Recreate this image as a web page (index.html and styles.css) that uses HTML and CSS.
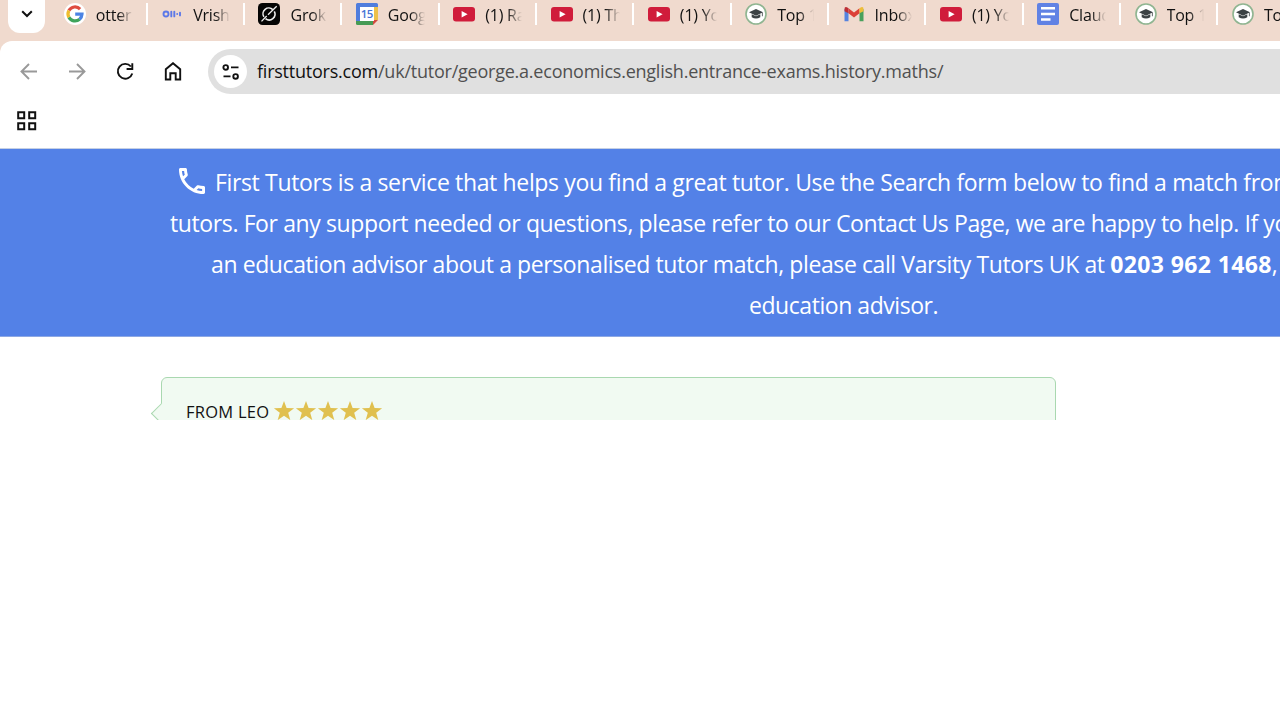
FILE: index.html
```
<!DOCTYPE html>
<html lang="en">
<head>
    <meta charset="UTF-8">
    <meta name="viewport" content="width=device-width, initial-scale=1.0">
    <title>First Tutors</title>
    <link rel="stylesheet" href="styles.css">
</head>
<body>
    <!-- Shared icons -->
    <svg class="symbols" width="0" height="0">
        <symbol id="youtube" viewBox="0 0 22 22">
            <rect x="0" y="4" width="22" height="14.5" rx="3" fill="#d01c3b"/>
            <path d="M8.6 8v6.4l6-3.2z" fill="#fff"/>
        </symbol>
        <symbol id="tutors" viewBox="0 0 22 22">
            <circle cx="11" cy="11" r="10" fill="#fff" stroke="#8fb591" stroke-width="1.6"/>
            <path d="M11 6l7 3.3-7 3.4-7-3.4zM6.7 11.2l4.3 2.1 4.3-2.1v3.1q-4.3 2.4-8.6 0zM16.9 9.7h.8v3.6h-.8z" fill="#3b4144"/>
        </symbol>
    </svg>

    <div class="tab-strip">
        <button class="tab-search">
            <svg width="12" height="8" viewBox="0 0 12 8"><path d="M1.2 1.2L6 6l4.8-4.8" fill="none" stroke="#111" stroke-width="2"/></svg>
        </button>
        <div class="tabs">
            <div class="tab">
                <svg class="favicon" viewBox="0 0 22 22">
                    <circle cx="11" cy="11" r="11" fill="#fff"/>
                    <g fill="none" stroke-width="3.2">
                        <path d="M16.1 6.1A7 7 0 0 0 4.9 7.6" stroke="#df4b3f"/>
                        <path d="M4.9 7.6a7 7 0 0 0 0 6.8" stroke="#efbd2c"/>
                        <path d="M4.9 14.4a7 7 0 0 0 10.7 1.8" stroke="#3fa45b"/>
                        <path d="M15.6 16.2A7 7 0 0 0 18 11.2H11.2" stroke="#4c83e4"/>
                    </g>
                </svg>
                <span class="tab-title">otter</span>
            </div>
            <div class="tab">
                <svg class="favicon" viewBox="0 0 22 22">
                    <g fill="none" stroke="#5d79e8" stroke-width="1.9" stroke-linecap="round">
                        <circle cx="5" cy="11" r="2.5"/>
                        <path d="M10.3 8.6v4.8M13.3 8.6v4.8M16.2 11v.1M19 9.6v2.8"/>
                    </g>
                </svg>
                <span class="tab-title">Vrish</span>
            </div>
            <div class="tab">
                <svg class="favicon" viewBox="0 0 22 22">
                    <rect width="22" height="22" rx="4.5" fill="#050505"/>
                    <g fill="none" stroke="#eee" stroke-width="1.6">
                        <path d="M14.8 6.6A5.8 5.8 0 0 0 5.9 13.9M7.5 15.6A5.8 5.8 0 0 0 16.3 8.4"/>
                        <path d="M3.5 18.4L8.7 13M10 11.7l8.7-8.4" stroke-width="1.3"/>
                    </g>
                </svg>
                <span class="tab-title">Grok</span>
            </div>
            <div class="tab">
                <svg class="favicon" viewBox="0 0 22 22">
                    <path d="M1.5 0h19A1.5 1.5 0 0 1 22 1.5V17H0V1.5A1.5 1.5 0 0 1 1.5 0z" fill="#507ddd"/>
                    <path d="M0 3h4v15H0z" fill="#507ddd"/>
                    <path d="M18 4h4v13h-4z" fill="#edc14a"/>
                    <path d="M0 18h17v4H1.5A1.5 1.5 0 0 1 0 20.5z" fill="#479b55"/>
                    <path d="M17 17h5l-5 5z" fill="#d34b41"/>
                    <rect x="4" y="4" width="14" height="14" fill="#fff"/>
                    <text x="10.8" y="15.2" text-anchor="middle" class="calendar-day">15</text>
                </svg>
                <span class="tab-title">Goog</span>
            </div>
            <div class="tab">
                <svg class="favicon"><use href="#youtube"/></svg>
                <span class="tab-title">(1) Ra</span>
            </div>
            <div class="tab">
                <svg class="favicon"><use href="#youtube"/></svg>
                <span class="tab-title">(1) Th</span>
            </div>
            <div class="tab">
                <svg class="favicon"><use href="#youtube"/></svg>
                <span class="tab-title">(1) Yo</span>
            </div>
            <div class="tab">
                <svg class="favicon"><use href="#tutors"/></svg>
                <span class="tab-title">Top 1</span>
            </div>
            <div class="tab">
                <svg class="favicon" viewBox="0 0 22 22">
                    <path d="M1.5 6v12.2h4V9z" fill="#5583df"/>
                    <path d="M20.5 6v12.2h-4V9z" fill="#48a05c"/>
                    <path d="M5.5 5.2L11 9.4l5.5-4.2v5L11 14.4l-5.5-4.2z" fill="#dc4037"/>
                    <path d="M1.5 8.2V6q0-3.4 4-.8v5z" fill="#bd2f36"/>
                    <path d="M20.5 8.2V6q0-3.4-4-.8v5z" fill="#edbd39"/>
                </svg>
                <span class="tab-title">Inbox</span>
            </div>
            <div class="tab">
                <svg class="favicon"><use href="#youtube"/></svg>
                <span class="tab-title">(1) Yo</span>
            </div>
            <div class="tab">
                <svg class="favicon" viewBox="0 0 22 22">
                    <rect width="22" height="22" rx="2" fill="#6182e4"/>
                    <path d="M4 5.3h14M4 11h14M4 16.5h9.500" stroke="#fff" stroke-width="2.4"/>
                </svg>
                <span class="tab-title">Claud</span>
            </div>
            <div class="tab">
                <svg class="favicon"><use href="#tutors"/></svg>
                <span class="tab-title">Top 1</span>
            </div>
            <div class="tab">
                <svg class="favicon"><use href="#tutors"/></svg>
                <span class="tab-title">Top 1</span>
            </div>
        </div>
    </div>

    <div class="browser">
        <div class="toolbar">
            <div class="nav-buttons">
                <svg viewBox="0 0 20 20" class="disabled"><path d="M18 9.5H3M10 2L2.5 9.5 10 17"/></svg>
                <svg viewBox="0 0 20 20" class="disabled"><path d="M2 9.5h15M10 2l7.5 7.5L10 17"/></svg>
                <svg viewBox="0 0 20 20"><path d="M15.9 4.5A7.4 7.4 0 1 0 17.3 11.5M17.3 1.3V7h-5.7"/></svg>
                <svg viewBox="0 0 20 20"><path d="M2.8 17.5V7.3L10 1.2l7.2 6.1v10.2h-4.500v-6.300H7.300v6.300z"/></svg>
            </div>
            <div class="address-bar">
                <div class="site-info">
                    <svg width="18" height="16" viewBox="0 0 18 16">
                        <g fill="none" stroke="#111" stroke-width="1.9">
                            <circle cx="3.7" cy="3.4" r="2.3"/>
                            <circle cx="13.6" cy="12.4" r="2.3"/>
                            <path d="M9 3.4h7.5M1.5 12.4h7"/>
                        </g>
                    </svg>
                </div>
                <div class="url"><span class="host">firsttutors.com</span>/uk/tutor/george.a.economics.english.entrance-exams.history.maths/</div>
            </div>
        </div>
        <div class="bookmarks">
            <svg width="20" height="20" viewBox="0 0 20 20">
                <path d="M1.2 1.2h6v6h-6zM12.2 1.2h6v6h-6zM1.2 12.2h6v6h-6zM12.2 12.2h6v6h-6z" fill="none" stroke="#111" stroke-width="2"/>
            </svg>
        </div>
    </div>

    <div class="banner">
        <p class="line line-1">
            <svg class="phone" viewBox="3 3 18 18"><path fill="#fff" d="M6.54 5c.06.89.21 1.76.45 2.59l-1.2 1.2c-.41-1.2-.67-2.47-.76-3.79h1.51m9.86 12.02c.85.24 1.72.39 2.6.45v1.49c-1.32-.09-2.59-.35-3.8-.75l1.2-1.19M7.5 3H4c-.55 0-1 .45-1 1 0 9.39 7.61 17 17 17 .55 0 1-.45 1-1v-3.490c0-.55-.45-1-1-1-1.240 0-2.450-.2-3.570-.57a.84.84 0 0 0-.31-.05c-.26 0-.51.1-.71.29l-2.200 2.200a15.150 15.150 0 0 1-6.590-6.590l2.200-2.200c.28-.28.36-.67.25-1.020A11.360 11.360 0 0 1 8.500 4c0-.55-.45-1-1-1z"/></svg>
            <span>First Tutors is a service that helps you find a great tutor. Use the Search form below to find a match from</span>
        </p>
        <p class="line line-2">tutors. For any support needed or questions, please refer to our Contact Us Page, we are happy to help. If you</p>
        <p class="line line-3">an education advisor about a personalised tutor match, please call Varsity Tutors UK at <b>0203 962 1468</b>,</p>
        <p class="line line-4">education advisor.</p>
    </div>

    <div class="reviews">
        <div class="review">
            <span class="author">FROM LEO</span>
            <svg class="stars" width="110" height="22" viewBox="0 0 110 22" fill="#e0c04f">
                <path id="star" d="M11 .9l2.6 7.1 7.5.2-5.9 4.6 2.1 7.3-6.3-4.3-6.3 4.3 2.1-7.3L.9 8.2l7.5-.2z"/>
                <use href="#star" x="22"/>
                <use href="#star" x="44"/>
                <use href="#star" x="66"/>
                <use href="#star" x="88"/>
            </svg>
        </div>
    </div>
</body>
</html>
```
FILE: styles.css
```
* {
    box-sizing: border-box;
}

body {
    margin: 0;
    height: 720px;
    background-color: #fff;
    font-family: "Open Sans", "Noto Sans", sans-serif;
    color: #111;
    overflow: hidden;
}

.symbols {
    position: absolute;
}

/* Tab strip */
.tab-strip {
    display: flex;
    height: 41px;
    background-color: #f0dace;
    overflow: hidden;
}

.tab-search {
    flex: none;
    display: flex;
    align-items: flex-end;
    justify-content: center;
    width: 37px;
    height: 33px;
    margin-left: 8px;
    padding: 0 0 15px;
    border: none;
    border-radius: 0 0 12px 12px;
    background-color: #fff;
}

.tabs {
    display: flex;
    flex: none;
    margin-left: 5.3px;
}

.tab {
    display: flex;
    align-items: center;
    flex: none;
    width: 97.35px;
    height: 22px;
    margin-top: 3px;
    padding-left: 13.5px;
    border-right: 2.5px solid #fff;
}

.favicon {
    flex: none;
    width: 22px;
    height: 22px;
}

.calendar-day {
    font-size: 11.5px;
    font-weight: 600;
    letter-spacing: -0.5px;
    fill: #4775d5;
}

.tab-title {
    width: 37px;
    margin: 2px 0 0 10px;
    font-size: 16px;
    line-height: 24px;
    letter-spacing: -0.2px;
    white-space: nowrap;
    overflow: hidden;
    -webkit-mask-image: linear-gradient(to right, #000 60%, transparent);
    mask-image: linear-gradient(to right, #000 60%, transparent);
}

/* Toolbar */
.browser {
    height: 108px;
    background: linear-gradient(#f0dace, #f0dace) 0 0 / 12px 12px no-repeat;
    border-bottom: 1px solid #c5d0e4;
}

.toolbar {
    display: flex;
    height: 53px;
    padding-top: 8px;
    background-color: #fff;
    border-top-left-radius: 12px;
}

.nav-buttons {
    display: flex;
    align-items: center;
    gap: 28px;
    width: 208px;
    padding-left: 19.4px;
}

.nav-buttons svg {
    width: 20px;
    height: 20px;
    fill: none;
    stroke: #111;
    stroke-width: 1.9;
}

.nav-buttons .disabled {
    stroke: #999;
}

.address-bar {
    display: flex;
    align-items: center;
    flex: 1;
    height: 45px;
    padding-left: 6px;
    background-color: #e0e0e0;
    border-radius: 23px 0 0 23px;
}

.site-info {
    display: flex;
    align-items: center;
    justify-content: center;
    width: 33px;
    height: 33px;
    border-radius: 50%;
    background-color: #fff;
}

.url {
    margin: -1px 0 0 10px;
    font-size: 18px;
    letter-spacing: -0.23px;
    color: #505050;
    white-space: nowrap;
}

.host {
    color: #111;
}

.bookmarks {
    padding: 17px 0 0 17px;
}

/* Support banner */
.banner {
    height: 188px;
    padding-top: 13px;
    background-color: #5381e7;
    border-bottom: 1px solid #8da8e4;
    color: #fff;
    overflow: hidden;
}

.line {
    margin: 0;
    height: 41px;
    font-size: 23px;
    line-height: 41px;
    white-space: nowrap;
}

.line-1 {
    display: flex;
    padding-left: 179px;
    letter-spacing: -0.355px;
}

.phone {
    flex: none;
    width: 26px;
    height: 26px;
    margin: 6px 10px 0 0;
}

.line-2 {
    padding-left: 170px;
    letter-spacing: -0.385px;
}

.line-3 {
    padding-left: 211px;
    letter-spacing: -0.4px;
}

.line-3 b {
    letter-spacing: 0.38px;
}

.line-4 {
    padding-left: 749px;
    letter-spacing: -0.45px;
}

/* Reviews */
.reviews {
    height: 83px;
    padding: 40px 0 0 161px;
    overflow: hidden;
}

.review {
    position: relative;
    display: flex;
    width: 895px;
    height: 120px;
    padding: 22px 24px;
    background-color: #f1faf2;
    border: 1.5px solid #a9d8b0;
    border-radius: 6px;
}

/* Speech bubble pointer */
.review::before {
    content: '';
    position: absolute;
    top: 28px;
    left: -8px;
    width: 14px;
    height: 14px;
    background-color: #f1faf2;
    border-left: 1px solid #a9d8b0;
    border-bottom: 1px solid #a9d8b0;
    transform: rotate(45deg);
}

.author {
    width: 87px;
    font-size: 16.5px;
    line-height: 24px;
    letter-spacing: 0.25px;
    white-space: nowrap;
}
```
